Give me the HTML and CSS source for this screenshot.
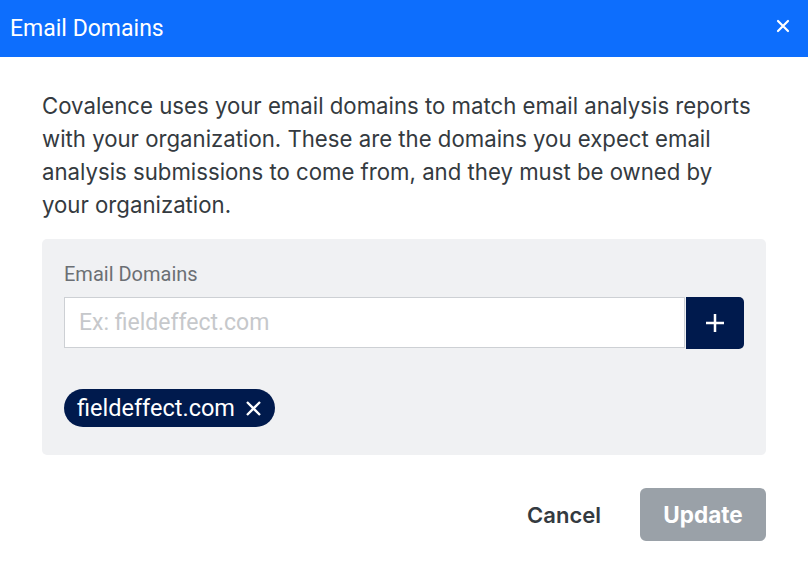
FILE: index.html
```html
<!DOCTYPE html>
<html>
<head>
<meta charset="utf-8">
<link rel="stylesheet" href="styles.css">
</head>
<body>
<div class="dialog">
  <div class="header">
    <div class="title">Email Domains</div>
    <button class="close" aria-label="Close">
      <svg width="14" height="14" viewBox="0 0 14 14"><path d="M2 2L12 12M12 2L2 12" stroke="#fff" stroke-width="2.2" stroke-linecap="round"/></svg>
    </button>
  </div>
  <div class="body">
    <p class="desc">Covalence uses your email domains to match email analysis reports with your organization. These are the domains you expect email analysis submissions to come from, and they must be owned by your organization.</p>
    <div class="panel">
      <label class="label">Email Domains</label>
      <div class="input-row">
        <input class="input" type="text" placeholder="Ex: fieldeffect.com">
        <button class="add" aria-label="Add">
          <svg width="20" height="20" viewBox="0 0 20 20"><path d="M10 1V19M1 10H19" stroke="#fff" stroke-width="2.5"/></svg>
        </button>
      </div>
      <div class="chips">
        <span class="chip">fieldeffect.com
          <svg width="17" height="17" viewBox="0 0 17 17"><path d="M2 2L15 15M15 2L2 15" stroke="#fff" stroke-width="2.3"/></svg>
        </span>
      </div>
    </div>
    <div class="footer">
      <button class="cancel">Cancel</button>
      <button class="update">Update</button>
    </div>
  </div>
</div>
</body>
</html>
```
FILE: styles.css
```css
html, body {
  margin: 0;
  padding: 0;
  background: #fff;
}
.dialog {
  width: 808px;
  height: 573px;
  background: #fff;
}
.header {
  height: 57px;
  background: #0d6efd;
  display: flex;
  align-items: center;
  justify-content: space-between;
  padding: 0 18px 0 10px;
  box-sizing: border-box;
}
.title {
  font-family: Roboto, "Liberation Sans", sans-serif;
  font-size: 23px;
  color: #fff;
}
.close {
  background: none;
  border: 0;
  padding: 0 0 6px 0;
  display: flex;
  cursor: pointer;
}
.body {
  padding: 32px 42px 0 42px;
}
.desc {
  margin: 0 8px 18px 0;
  font-family: Inter, "Liberation Sans", sans-serif;
  font-size: 22.2px;
  line-height: 33px;
  color: #343a40;
}
.panel {
  background: #f0f1f3;
  border-radius: 5px;
  padding: 22px 22px 28px 22px;
  display: flex;
  flex-direction: column;
}
.label {
  font-family: Roboto, "Liberation Sans", sans-serif;
  font-size: 20px;
  line-height: 26px;
  color: #6b6f74;
  margin-bottom: 10px;
}
.input-row {
  display: flex;
  height: 52px;
}
.input {
  flex: 1;
  height: 51px;
  box-sizing: border-box;
  border: 1px solid #cdd0d4;
  border-radius: 0;
  padding: 0 14px;
  font-family: Roboto, "Liberation Sans", sans-serif;
  font-size: 23px;
  color: #333;
  background: #fff;
  outline: none;
}
.input::placeholder {
  color: #c6c8cb;
}
.add {
  width: 58px;
  height: 52px;
  margin-left: 1px;
  background: #001a4d;
  border: 0;
  border-radius: 0 5px 5px 0;
  display: flex;
  align-items: center;
  justify-content: center;
  padding: 0;
  cursor: pointer;
}
.chips {
  display: flex;
  margin-top: 40px;
}
.chip {
  display: inline-flex;
  align-items: center;
  gap: 10px;
  height: 38px;
  padding: 0 13px 0 13px;
  border-radius: 19px;
  background: #001a4d;
  color: #fff;
  font-family: Roboto, "Liberation Sans", sans-serif;
  font-size: 23.5px;
}
.footer {
  display: flex;
  justify-content: flex-end;
  align-items: center;
  margin-top: 33px;
  gap: 14px;
}
.cancel {
  background: none;
  border: 0;
  font-family: Inter, "Liberation Sans", sans-serif;
  font-weight: 600;
  font-size: 22px;
  color: #343a40;
  padding: 0 25px;
  height: 53px;
  cursor: pointer;
}
.update {
  width: 126px;
  height: 53px;
  background: #9aa1a8;
  border: 0;
  border-radius: 6px;
  font-family: Inter, "Liberation Sans", sans-serif;
  font-weight: 700;
  font-size: 22.5px;
  color: #fff;
  cursor: pointer;
}
```
